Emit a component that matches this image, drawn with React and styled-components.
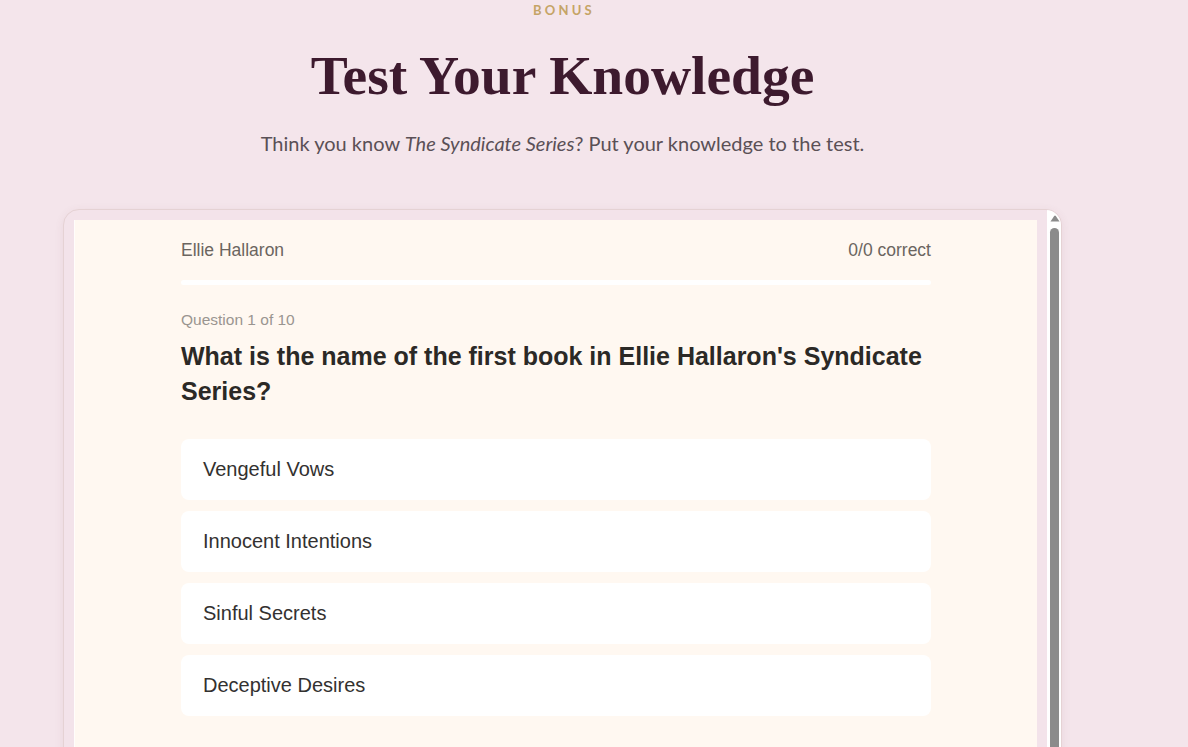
import React from "react";
import styled, { createGlobalStyle } from "styled-components";

const GlobalStyle = createGlobalStyle`
  html, body {
    margin: 0;
    padding: 0;
    background: #f4e5eb;
    overflow: hidden;
  }

  * {
    box-sizing: border-box;
  }
`;

const Page = styled.main`
  padding: 0 126px 0 63px;
  font-family: Lato, "Open Sans", sans-serif;
`;

const Intro = styled.header`
  display: flex;
  flex-direction: column;
  align-items: center;
  text-align: center;
  margin-bottom: 52px;
`;

const Eyebrow = styled.span`
  font-family: Lato, sans-serif;
  font-weight: 700;
  font-size: 13px;
  letter-spacing: 3.2px;
  line-height: 20px;
  color: #c5a466;
  margin-left: 3px;
`;

const Title = styled.h1`
  margin: 22px 0 0;
  font-family: "Liberation Serif", "DejaVu Serif", serif;
  font-weight: 700;
  font-size: 55.5px;
  line-height: 68px;
  color: #3d1a2e;
`;

const Lead = styled.p`
  margin: 19px 0 0;
  font-size: 20px;
  line-height: 28px;
  color: #5a5056;

  em {
    font-style: italic;
  }
`;

const Frame = styled.section`
  display: flex;
  height: 620px;
  padding-left: 10px;
  background: #f3e3ea;
  border: 1px solid #e5d2d4;
  border-radius: 16px;
  box-shadow: 0 2px 10px rgba(120, 70, 80, 0.08);
  overflow: hidden;
`;

const Viewport = styled.div`
  flex: 1;
  margin: 10px 10px 0 0;
  overflow: hidden;
`;

const Rail = styled.div`
  display: flex;
  flex-direction: column;
  width: 14px;
  flex-shrink: 0;
  background: #ffffff;
`;

const RailArrow = styled.div`
  display: flex;
  justify-content: center;
  align-items: flex-end;
  height: 12px;
  padding-left: 1px;
`;

const RailThumb = styled.div`
  flex: 1;
  margin: 6px 2px 0 3px;
  border-radius: 5px 5px 0 0;
  background: #8b8b8b;
`;

const Quiz = styled.div`
  min-height: 720px;
  background: #fff8f1;
  border-left: 1px solid #fffdfb;
  padding: 17px 20px 40px;
`;

const Inner = styled.div`
  max-width: 750px;
  margin: 0 auto;
  font-family: "Liberation Sans", Arial, sans-serif;
`;

const StatusRow = styled.div`
  display: flex;
  justify-content: space-between;
  align-items: center;
  font-size: 17.5px;
  line-height: 26px;
  color: #6b6560;
`;

const Progress = styled.div`
  height: 5px;
  margin-top: 17px;
  border-radius: 3px;
  background: #ffffff;
  overflow: hidden;
`;

const ProgressFill = styled.div`
  height: 100%;
  background: #c5a466;
`;

const Counter = styled.div`
  margin-top: 24px;
  font-size: 15.5px;
  line-height: 22px;
  color: #9a9590;
`;

const Question = styled.h2`
  margin: 8px 0 0;
  font-size: 25px;
  line-height: 35px;
  font-weight: 700;
  color: #2b2926;
`;

const Options = styled.div`
  display: flex;
  flex-direction: column;
  gap: 11px;
  margin-top: 30px;
`;

const Option = styled.button`
  display: block;
  width: 100%;
  padding: 18px 22px;
  border: none;
  border-radius: 8px;
  background: #ffffff;
  text-align: left;
  font-family: "Liberation Sans", Arial, sans-serif;
  font-size: 20px;
  line-height: 25px;
  color: #333130;
  cursor: pointer;
`;

const answers = [
  "Vengeful Vows",
  "Innocent Intentions",
  "Sinful Secrets",
  "Deceptive Desires",
];

const App = () => {
  const score = { right: 0, total: 0 };
  return (
    <>
      <GlobalStyle />
      <Page>
        <Intro>
          <Eyebrow>BONUS</Eyebrow>
          <Title>Test Your Knowledge</Title>
          <Lead>
            Think you know <em>The Syndicate Series</em>? Put your knowledge to the test.
          </Lead>
        </Intro>
        <Frame>
          <Viewport>
            <Quiz>
              <Inner>
                <StatusRow>
                  <span>Ellie Hallaron</span>
                  <span>
                    {score.right}/{score.total} correct
                  </span>
                </StatusRow>
                <Progress>
                  <ProgressFill style={{ width: `${(score.right / 10) * 100}%` }} />
                </Progress>
                <Counter>Question 1 of 10</Counter>
                <Question>
                  What is the name of the first book in Ellie Hallaron's Syndicate Series?
                </Question>
                <Options>
                  {answers.map((a) => (
                    <Option key={a}>{a}</Option>
                  ))}
                </Options>
              </Inner>
            </Quiz>
          </Viewport>
          <Rail>
            <RailArrow>
              <svg width="10" height="7" viewBox="0 0 10 7">
                <path d="M5 0.5 Q5.4 0.5 5.8 1 L9.5 6.5 L0.5 6.5 L4.2 1 Q4.6 0.5 5 0.5 Z" fill="#8b8b8b" />
              </svg>
            </RailArrow>
            <RailThumb />
          </Rail>
        </Frame>
      </Page>
    </>
  );
};

export default App;
